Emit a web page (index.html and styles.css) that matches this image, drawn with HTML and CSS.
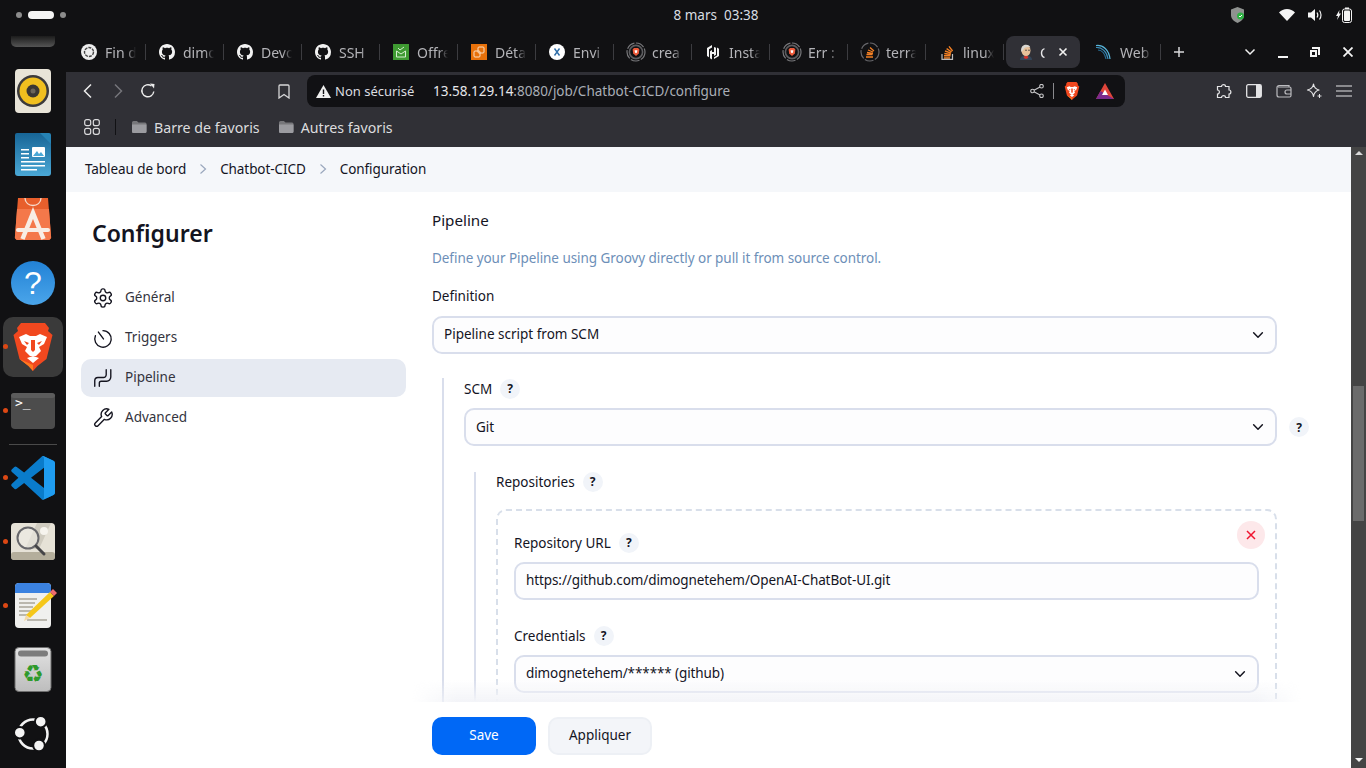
FILE: index.html
```html
<!DOCTYPE html>
<html lang="fr">
<head>
    <meta charset="UTF-8">
    <meta name="viewport" content="width=device-width, initial-scale=1.0">
    <title>Chatbot-CICD Config [Jenkins]</title>
    <link rel="stylesheet" href="styles.css">
</head>
<body>
    <svg class="defs" width="0" height="0">
        <symbol id="i-github" viewBox="0 0 16 16"><path fill="#f2f2f2" d="M8 0C3.58 0 0 3.58 0 8c0 3.54 2.29 6.53 5.47 7.59.4.07.55-.17.55-.38 0-.19-.01-.82-.01-1.49-2.01.37-2.53-.49-2.69-.94-.09-.23-.48-.94-.82-1.13-.28-.15-.68-.52-.01-.53.63-.01 1.08.58 1.23.82.72 1.21 1.87.87 2.33.66.07-.52.28-.87.51-1.07-1.78-.2-3.64-.89-3.64-3.95 0-.87.31-1.59.82-2.15-.08-.2-.36-1.02.08-2.12 0 0 .67-.21 2.2.82.64-.18 1.32-.27 2-.27.68 0 1.36.09 2 .27 1.53-1.04 2.2-.82 2.2-.82.44 1.1.16 1.92.08 2.12.51.56.82 1.27.82 2.15 0 3.07-1.87 3.75-3.65 3.95.29.25.54.73.54 1.48 0 1.07-.01 1.93-.01 2.2 0 .21.15.46.55.38A8.013 8.013 0 0016 8c0-4.42-3.58-8-8-8z"/></symbol>
        <symbol id="i-ring" viewBox="0 0 20 20"><circle cx="10" cy="10" r="9" fill="none" stroke="#77777a" stroke-width="1.2" stroke-dasharray="9 1.5"/><circle cx="10" cy="10" r="6.6" fill="none" stroke="#5d5d60" stroke-width="1.6"/><path fill="#ee5a3a" d="M6.6 7.4 8 6h4l1.4 1.4-.6 4L10 14l-2.8-2.6z"/><path fill="#fff" d="M8.6 8.2h2.8l-.4 2.2-1 .8-1-.8z"/></symbol>
        <symbol id="i-so" viewBox="0 0 16 16"><path fill="none" stroke="#f48024" stroke-width="1.4" d="M5 14h6M5 11.800h6.500M5.300 9.500l6.500 1M6 7l6 2.200M7.600 4.600l5 3.400M10 2.400l3.600 4.600"/><path fill="none" stroke="#bcbbbb" stroke-width="1.2" d="M3 10v5.400h10.500V10"/></symbol>
        <symbol id="i-chev" viewBox="0 0 16 16"><path fill="none" stroke="#14141f" stroke-width="1.7" stroke-linecap="round" stroke-linejoin="round" d="m3 5.500 5 5 5-5"/></symbol>
        <symbol id="i-folder" viewBox="0 0 16 16"><path fill="#77777b" d="M1 3.500A1.500 1.500 0 0 1 2.500 2h3.400l1.600 1.400H14A1.500 1.500 0 0 1 15.500 5v7.500A1.500 1.500 0 0 1 14 14H2.500A1.500 1.500 0 0 1 1 12.500z"/><path fill="#9b9ba0" d="M1 5.500h14.500v7A1.500 1.500 0 0 1 14 14H2.500A1.500 1.500 0 0 1 1 12.500z"/></symbol>
        <symbol id="i-brave" viewBox="0 0 40 48"><path fill="#f1481f" d="M8 0h24l4 5-1 3 4.500 4-6 24-9 7-4.500 5-4.500-5-9-7-6-24L5 8 4 5z"/><path fill="#ff7a1f" d="M20 48l-4.500-5-9-7L20 42z"/><path fill="#fff" d="M6 14l7-3 4 2h6l4-2 7 3-3 7-5 3 2 4-5 5h-6l-5-5 2-4-5-3zM14 35l6-2 6 2-6 5z"/><path fill="#f1481f" d="M18 17h4v10l-2 2-2-2zM11 18l5 2-2 2zM29 18l-5 2 2 2z"/></symbol>
    </svg>

    <header class="topbar">
        <div class="workspaces"><span class="ws-dot"></span><span class="ws-pill"></span><span class="ws-dot"></span></div>
        <div class="clock">8 mars&nbsp;&nbsp;03:38</div>
        <div class="tray">
            <svg class="tray-shield" width="14" height="16" viewBox="0 0 14 16"><path fill="#8f9290" d="M6.500 0 13 2.500V8c0 3.500-2.700 6.500-6.500 8C2.700 14.500 0 11.500 0 8V2.500z"/><circle cx="9.500" cy="9" r="3.500" fill="#2fb344"/><path fill="none" stroke="#fff" d="m8 9 1 1 2-2"/></svg>
            <svg class="tray-wifi" width="16" height="12" viewBox="0 0 16 12"><path fill="#f4f4f4" d="M0 3.500C2 1.500 5 0 8 0s6 1.500 8 3.500L8 12z"/></svg>
            <svg class="tray-sound" width="15" height="14" viewBox="0 0 15 14"><path fill="#f4f4f4" d="M0 4.500h3L7 1v12L3 9.500H0z"/><path fill="none" stroke="#f4f4f4" stroke-width="1.200" d="M9 4.500c1 1.500 1 3.500 0 5M11.500 2.500c2 2.500 2 6.500 0 9"/></svg>
            <svg class="tray-battery" width="16" height="16" viewBox="0 0 16 16"><path fill="#f4f4f4" d="M3.500 3 0 9h2l-1 4 4-6.500H3z"/><rect x="6.500" y="2" width="9" height="13.500" rx="2" fill="none" stroke="#f4f4f4"/><rect x="9" y="0.500" width="4" height="1.500" fill="#f4f4f4"/><rect x="8" y="3.500" width="6" height="10.500" rx="1" fill="#f4f4f4"/></svg>
        </div>
    </header>

    <div class="desktop">
        <nav class="dock">
            <div class="dock-top"></div>
            <div class="dock-item">
                <svg width="48" height="48" viewBox="0 0 48 48"><rect x="6" y="2" width="36" height="44" rx="4" fill="#e8e4d8"/><circle cx="24" cy="24" r="16" fill="#3b3a3c"/><circle cx="24" cy="24" r="13.500" fill="#f0bf1f"/><circle cx="24" cy="24" r="6.500" fill="#3a3733"/><circle cx="24" cy="24" r="2.500" fill="#6b655a"/></svg>
            </div>
            <div class="dock-item">
                <svg width="48" height="48" viewBox="0 0 48 48"><defs><linearGradient id="wr" x1="0" y1="0" x2="0" y2="1"><stop offset="0" stop-color="#176596"/><stop offset="1" stop-color="#4aa8d6"/></linearGradient></defs><path fill="url(#wr)" d="M8 2h26l8 8v32a3 3 0 0 1-3 3H9a3 3 0 0 1-3-3V4a2 2 0 0 1 2-2z"/><path fill="#2683b5" d="M31 2h9a2 2 0 0 1 2 2v9z"/><g fill="#fff"><rect x="12" y="18" width="8" height="1.500"/><rect x="12" y="22" width="8" height="1.500"/><rect x="12" y="26" width="8" height="1.500"/><rect x="12" y="30" width="24" height="1.500"/><rect x="12" y="34" width="24" height="1.500"/><rect x="12" y="38" width="16" height="1.500"/><rect x="23" y="16" width="13" height="10" rx="1"/></g><path fill="#4aa8d6" d="m24 25 4-5 2 3 2-2 3 4z"/></svg>
            </div>
            <div class="dock-item">
                <svg width="48" height="48" viewBox="0 0 48 48"><path fill="#e85f2c" d="M9 3h30l3 38a3 3 0 0 1-3 4H9a3 3 0 0 1-3-4z"/><path fill="#f4784a" d="M8 14h32l2 27a3 3 0 0 1-3 4H9a3 3 0 0 1-3-4z"/><path fill="none" stroke="#f6dccd" stroke-width="1.300" d="M16 3c0 10 16 10 16 0"/><path fill="none" stroke="#f8ede4" stroke-width="4.500" d="M13.500 44 24 18l10.500 26"/><path fill="none" stroke="#f8ede4" stroke-width="4" stroke-linecap="round" d="M9 35h30"/></svg>
            </div>
            <div class="dock-item">
                <svg width="48" height="48" viewBox="0 0 48 48"><defs><linearGradient id="hp" x1="0" y1="0" x2="0" y2="1"><stop offset="0" stop-color="#2282d6"/><stop offset="1" stop-color="#4aa5ea"/></linearGradient></defs><circle cx="24" cy="24" r="22" fill="url(#hp)"/><text x="24" y="35" text-anchor="middle" class="dock-q">?</text></svg>
            </div>
            <div class="dock-item dock-active">
                <span class="run-dot"></span>
                <svg width="40" height="48"><use href="#i-brave"/></svg>
            </div>
            <div class="dock-item">
                <span class="run-dot"></span>
                <svg width="48" height="48" viewBox="0 0 48 48"><rect x="2" y="6" width="44" height="36" rx="4" fill="#4c4c4c"/><rect x="2" y="6" width="44" height="5" rx="3" fill="#5c5c5c"/><text x="6" y="20" class="dock-term">&gt;_</text></svg>
            </div>
            <div class="dock-sep"></div>
            <div class="dock-item">
                <span class="run-dot"></span>
                <svg width="44" height="44" viewBox="0 0 100 100"><path fill="#0a7ccb" d="M96.460 10.800 75.860.87a6.230 6.230 0 0 0-7.100 1.200L29.900 37.600 12.970 24.750a4.160 4.160 0 0 0-5.320.24l-5.530 5.030a4.160 4.160 0 0 0 0 6.150L16.800 49.570 2.120 62.970a4.160 4.160 0 0 0 0 6.150l5.530 5.030a4.160 4.160 0 0 0 5.320.24L29.900 61.540l38.860 35.530a6.230 6.230 0 0 0 7.100 1.200l20.600-9.910A6.240 6.240 0 0 0 100 82.730V16.400a6.240 6.240 0 0 0-3.540-5.600zM75 72.700 45.500 49.570 75 26.430z"/><path fill="#1f9cf0" d="M68.760 2.070a6.230 6.230 0 0 1 7.100-1.200l20.600 9.930A6.240 6.240 0 0 1 100 16.400v66.330a6.240 6.240 0 0 1-3.540 5.630l-20.600 9.910a6.230 6.230 0 0 1-7.100-1.200c2.300 2.300 6.240.67 6.240-2.580V4.650c0-3.250-3.940-4.880-6.240-2.580z"/></svg>
            </div>
            <div class="dock-item">
                <span class="run-dot"></span>
                <svg width="48" height="48" viewBox="0 0 48 48"><rect x="2" y="5" width="44" height="37" rx="4" fill="#e6e2d7"/><path fill="#cfcbbf" d="m28 5 14 0-12 26H16z"/><rect x="2" y="34" width="44" height="8" rx="3" fill="#b4ae9c"/><circle cx="35" cy="13" r="4" fill="#f6f4ee"/><circle cx="19" cy="20" r="10.500" fill="#eeece6" fill-opacity=".6" stroke="#67676b" stroke-width="2"/><path stroke="#454548" stroke-width="3" stroke-linecap="round" d="m27 28 8 8"/></svg>
            </div>
            <div class="dock-item">
                <span class="run-dot"></span>
                <svg width="48" height="48" viewBox="0 0 48 48"><rect x="6" y="1" width="36" height="45" rx="4" fill="#f0f0ee"/><path fill="#3b82e0" d="M10 1h28a4 4 0 0 1 4 4v6H6V5a4 4 0 0 1 4-4z"/><g fill="#bab7ae"><rect x="10" y="16" width="18" height="2"/><rect x="10" y="20" width="16" height="2"/><rect x="10" y="24" width="14" height="2"/><rect x="10" y="28" width="12" height="2"/><rect x="10" y="32" width="10" height="2"/><rect x="18" y="37" width="20" height="2"/></g><path fill="#f5c71a" d="m41 10 4 4-24 22-4-3z"/><path fill="#f3d9a6" d="m17 33 4 3-6 3z"/><path fill="#ee6b6f" d="m41 10 3-3 4 4-3 3z"/></svg>
            </div>
            <div class="dock-item">
                <svg width="48" height="48" viewBox="0 0 48 48"><defs><linearGradient id="tr" x1="0" y1="0" x2="0" y2="1"><stop offset="0" stop-color="#e2e2e2"/><stop offset="1" stop-color="#bdbdbd"/></linearGradient></defs><rect x="6" y="1.500" width="36" height="44" rx="4" fill="url(#tr)" stroke="#6f6f6f"/><rect x="9" y="4.500" width="30" height="6" rx="3" fill="#7c7c7c"/><text x="24" y="36" text-anchor="middle" class="dock-recycle">♻</text></svg>
            </div>
            <div class="dock-item">
                <svg width="38" height="38" viewBox="0 0 38 38"><circle cx="19" cy="19" r="14.500" fill="none" stroke="#f4f4f4" stroke-width="2.500"/><g fill="#f4f4f4" stroke="#111113" stroke-width="2"><circle cx="26.700" cy="6.700" r="5.800"/><circle cx="5.800" cy="17.700" r="5.800"/><circle cx="25" cy="30.500" r="5.800"/></g></svg>
            </div>
        </nav>

        <div class="browser">
            <div class="tabstrip">
                <div class="tab"><svg width="16" height="16" viewBox="0 0 16 16"><circle cx="8" cy="8" r="8" fill="#ededed"/><circle cx="8" cy="8" r="4.500" fill="none" stroke="#444" stroke-width="1.400" stroke-dasharray="3 1"/></svg><span class="tab-label">Fin d</span></div>
                <div class="tab"><svg width="16" height="16"><use href="#i-github"/></svg><span class="tab-label">dimo</span></div>
                <div class="tab"><svg width="16" height="16"><use href="#i-github"/></svg><span class="tab-label">Devo</span></div>
                <div class="tab"><svg width="16" height="16"><use href="#i-github"/></svg><span class="tab-label">SSH</span></div>
                <div class="tab"><svg width="16" height="16" viewBox="0 0 16 16"><rect width="16" height="16" fill="#3f9a32"/><path fill="none" stroke="#d6efd0" d="M3.500 7 8 10l4.500-3v6h-9zM5 4l2 2 4-3"/></svg><span class="tab-label">Offre</span></div>
                <div class="tab"><svg width="16" height="16" viewBox="0 0 16 16"><rect width="16" height="16" fill="#e8710a"/><g fill="none" stroke="#fbe0c4"><rect x="3" y="7" width="6" height="6" rx="1"/><rect x="7" y="3" width="6" height="6" rx="1"/></g></svg><span class="tab-label">Déta</span></div>
                <div class="tab"><svg width="16" height="16" viewBox="0 0 16 16"><circle cx="8" cy="8" r="8" fill="#fff"/><path fill="none" stroke="#2f6ea8" stroke-width="1.400" d="M5.500 4.500 10.500 11.500M10.500 4.500 5.500 11.500"/></svg><span class="tab-label">Envi</span></div>
                <div class="tab"><svg class="tab-ring" width="20" height="20"><use href="#i-ring"/></svg><span class="tab-label">crea</span></div>
                <div class="tab"><svg width="16" height="16" viewBox="0 0 16 16"><path fill="#f2f2f2" d="M7 1 2 4v8l2 1.200V5.200L7 3.400zM9 3v5H7V6l-2 1.200v7L7 15.500V10h2v2l2-1.200v-7zM12 3.600v7.800L9 13.200V15l5-3V4.800z"/></svg><span class="tab-label">Insta</span></div>
                <div class="tab"><svg class="tab-ring" width="20" height="20"><use href="#i-ring"/></svg><span class="tab-label">Err :</span></div>
                <div class="tab"><svg class="tab-ring" width="20" height="20" viewBox="0 0 20 20"><circle cx="10" cy="10" r="9" fill="none" stroke="#66666a" stroke-width="1.200" stroke-dasharray="9 1.500"/><path fill="none" stroke="#f48024" stroke-width="1.300" d="M6 15h7M6.500 12.500h6M7 10.500l6 1M8 8l5 2M10 5.500l4 3.500"/></svg><span class="tab-label">terra</span></div>
                <div class="tab"><svg width="16" height="16"><use href="#i-so"/></svg><span class="tab-label">linux</span></div>
                <div class="tab tab-active">
                    <svg width="16" height="16" viewBox="0 0 16 16"><path fill="#34465a" d="M2 16c0-3 2-4.500 6-4.500s6 1.500 6 4.500z"/><path fill="#d0322b" d="M6.500 12h3l1 2-2.500 1-2.500-1z"/><ellipse cx="8" cy="6.500" rx="4.500" ry="5.500" fill="#e6c09a"/><path fill="#d9d7d2" d="M3.300 8C2.500 3 5 .8 8 .8c2.500 0 4 1.200 4.300 2.700C10 2.700 6.500 3 5.500 5.500z"/><circle cx="8" cy="6.200" r=".7" fill="#333"/><circle cx="11" cy="6.200" r=".7" fill="#333"/></svg>
                    <span class="tab-label">C</span>
                    <svg class="tab-close" width="10" height="10" viewBox="0 0 10 10"><path stroke="#f2f2f2" stroke-width="1.600" d="m1.500 1.500 7 7M8.500 1.500l-7 7"/></svg>
                </div>
                <div class="tab tab-after"><svg width="16" height="16" viewBox="0 0 16 16"><g fill="none" stroke-width="1.200"><path stroke="#58b4d8" d="M0 1.500C7 .5 13 6 14 15"/><path stroke="#3a8cb8" d="M0 3.500C6 3 11 8 12 15"/><path stroke="#2a6f95" d="M2 6c4 0 7 4 8 9"/></g></svg><span class="tab-label">Web</span></div>
                <button class="new-tab"><svg width="12" height="12" viewBox="0 0 12 12"><path stroke="#d8d8da" stroke-width="1.500" d="M6 1v10M1 6h10"/></svg></button>
                <div class="win-controls">
                    <span class="win-btn"><svg width="12" height="8" viewBox="0 0 12 8"><path fill="none" stroke="#f0f0f0" stroke-width="1.500" d="m1.500 1.500 4.500 4.500 4.500-4.500"/></svg></span>
                    <span class="win-btn"><svg width="10" height="12" viewBox="0 0 10 12"><rect y="10" width="10" height="2" fill="#f4f4f4"/></svg></span>
                    <span class="win-btn"><svg width="10" height="10" viewBox="0 0 10 10"><path fill="#f4f4f4" d="M2 0h8v8H8V2H2zM0 3h7v7H0zM2 5v3h3V5z" fill-rule="evenodd"/></svg></span>
                    <span class="win-btn"><svg width="10" height="10" viewBox="0 0 10 10"><path stroke="#f4f4f4" stroke-width="1.800" d="m.5.500 9 9M9.500.500l-9 9"/></svg></span>
                </div>
            </div>

            <div class="toolbar">
                <div class="nav-btn"><svg width="10" height="16" viewBox="0 0 10 16"><path fill="none" stroke="#ececec" stroke-width="1.500" d="M8 1.500 1.500 8 8 14.500"/></svg></div>
                <div class="nav-btn"><svg width="10" height="16" viewBox="0 0 10 16"><path fill="none" stroke="#75757a" stroke-width="1.500" d="M2 1.500 8.500 8 2 14.500"/></svg></div>
                <div class="nav-btn"><svg width="16" height="16" viewBox="0 0 16 16"><path fill="none" stroke="#ececec" stroke-width="1.400" d="M13.800 8.500A6 6 0 1 1 11.500 3"/><path fill="#ececec" d="M10 .5 14.500 1l-.5 4.500z"/></svg></div>
                <svg class="bookmark" width="12" height="15" viewBox="0 0 12 15"><path fill="none" stroke="#d6d6d8" stroke-width="1.300" d="M1 2a1 1 0 0 1 1-1h8a1 1 0 0 1 1 1v12L6 10.500 1 14z"/></svg>
                <div class="urlbar">
                    <svg width="15" height="13" viewBox="0 0 15 13"><path fill="#efefef" d="M7.500 0 15 13H0z"/><path fill="#111114" d="M6.800 4.500h1.400V9H6.800zM6.800 10h1.400v1.400H6.800z"/></svg>
                    <span class="not-secure">Non sécurisé</span>
                    <span class="url"><span class="url-host">13.58.129.14</span>:8080/job/Chatbot-CICD/configure</span>
                    <svg class="url-share" width="14" height="14" viewBox="0 0 14 14"><g fill="none" stroke="#c8c8ca" stroke-width="1.100"><circle cx="2.500" cy="7" r="1.800"/><circle cx="11.500" cy="2.200" r="1.800"/><circle cx="11.500" cy="11.800" r="1.800"/><path d="M4 6.200 10 3M4 7.800 10 11"/></g></svg>
                    <span class="url-sep"></span>
                    <svg class="url-brave" width="16" height="18"><use href="#i-brave"/></svg>
                    <svg class="url-bat" width="18" height="16" viewBox="0 0 18 16"><path fill="#e0453a" d="M9 0 18 16H0z"/><path fill="#7b2b8c" d="M4.500 8 9 16h9zM0 16l4.500-8L9 16z"/><path fill="#fff" d="M9 6.500 12 12H6z"/></svg>
                </div>
                <div class="tool-icons">
                    <svg width="16" height="16" viewBox="0 0 16 16"><path fill="none" stroke="#e4e4e6" stroke-width="1.200" d="M5.500 3.500C5.500 1 9.500 1 9.500 3.500H13V7c2.500 0 2.500 4 0 4v3.500H9.500c0-2.500-4-2.500-4 0h-4V11c2.500 0 2.500-4 0-4V3.500z"/></svg>
                    <svg width="16" height="14" viewBox="0 0 16 14"><rect x=".7" y=".7" width="14.600" height="12.600" rx="1.500" fill="none" stroke="#e4e4e6" stroke-width="1.300"/><rect x="10" y="1" width="5" height="12" fill="#e4e4e6"/></svg>
                    <svg width="16" height="14" viewBox="0 0 16 14"><path fill="none" stroke="#bcbcc0" stroke-width="1.200" d="M13 3V1.500H3A2 2 0 0 0 1 3.500V11a2 2 0 0 0 2 2h10.500a1.500 1.500 0 0 0 1.500-1.500v-7A1.500 1.500 0 0 0 13.500 3H2"/><path fill="none" stroke="#bcbcc0" stroke-width="1.200" d="M15 6h-4a2 2 0 0 0 0 4h4"/></svg>
                    <svg width="16" height="16" viewBox="0 0 16 16"><path fill="none" stroke="#e4e4e6" stroke-width="1.200" stroke-linejoin="round" d="M7.500 1c.5 3.500 2 5 5.500 6-3.500 1-5 2.500-5.500 6.500C7 10 5.500 8 1.500 7c4-1 5.500-2.500 6-6z"/><path fill="#e4e4e6" d="M13 11h1v1.500h1.500v1H14V15h-1v-1.500h-1.500v-1H13z"/></svg>
                    <svg width="16" height="12" viewBox="0 0 16 12"><path stroke="#e4e4e6" stroke-width="1.200" d="M0 1h16M0 6h16M0 11h16"/></svg>
                </div>
            </div>

            <div class="bookmarks">
                <svg class="apps" width="16" height="16" viewBox="0 0 16 16"><g fill="none" stroke="#dcdcde" stroke-width="1.200"><rect x=".7" y=".7" width="6" height="6" rx="2"/><rect x="9.300" y=".7" width="6" height="6" rx="2"/><rect x=".7" y="9.300" width="6" height="6" rx="2"/><rect x="9.300" y="9.300" width="6" height="6" rx="2"/></g></svg>
                <span class="bm-sep"></span>
                <svg width="16" height="16"><use href="#i-folder"/></svg>
                <span class="bm-label">Barre de favoris</span>
                <svg class="bm-second" width="16" height="16"><use href="#i-folder"/></svg>
                <span class="bm-label">Autres favoris</span>
            </div>

            <div class="viewport">
                <div class="page">
                    <div class="breadcrumbs">
                        <span class="crumb">Tableau de bord</span>
                        <svg width="8" height="12" viewBox="0 0 8 12"><path fill="none" stroke="#9aa7bd" stroke-width="1.200" d="m1.500 1.500 5 4.500-5 4.500"/></svg>
                        <span class="crumb">Chatbot-CICD</span>
                        <svg width="8" height="12" viewBox="0 0 8 12"><path fill="none" stroke="#9aa7bd" stroke-width="1.200" d="m1.500 1.500 5 4.500-5 4.500"/></svg>
                        <span class="crumb">Configuration</span>
                    </div>
                    <div class="page-body">
                        <aside class="sidebar">
                            <h1>Configurer</h1>
                            <ul class="side-menu">
                                <li class="side-item">
                                    <svg width="22" height="22" viewBox="0 0 24 24"><path d="M12.220 2h-.44a2 2 0 0 0-2 2v.18a2 2 0 0 1-1 1.730l-.43.25a2 2 0 0 1-2 0l-.15-.08a2 2 0 0 0-2.730.73l-.22.38a2 2 0 0 0 .73 2.730l.15.1a2 2 0 0 1 1 1.720v.51a2 2 0 0 1-1 1.740l-.15.09a2 2 0 0 0-.73 2.730l.22.38a2 2 0 0 0 2.730.73l.15-.08a2 2 0 0 1 2 0l.43.25a2 2 0 0 1 1 1.730V20a2 2 0 0 0 2 2h.44a2 2 0 0 0 2-2v-.18a2 2 0 0 1 1-1.730l.43-.25a2 2 0 0 1 2 0l.15.08a2 2 0 0 0 2.730-.73l.22-.39a2 2 0 0 0-.73-2.730l-.15-.08a2 2 0 0 1-1-1.740v-.5a2 2 0 0 1 1-1.740l.15-.09a2 2 0 0 0 .73-2.730l-.22-.38a2 2 0 0 0-2.730-.73l-.15.08a2 2 0 0 1-2 0l-.43-.25a2 2 0 0 1-1-1.730V4a2 2 0 0 0-2-2z"/><circle cx="12" cy="12" r="3"/></svg>
                                    <span class="side-label">Général</span>
                                </li>
                                <li class="side-item">
                                    <svg width="22" height="22" viewBox="0 0 24 24"><path d="M12 4a9 9 0 1 1-8.300 5.500"/><path d="M7 5.500l5.500 7.500"/></svg>
                                    <span class="side-label">Triggers</span>
                                </li>
                                <li class="side-item side-active">
                                    <svg width="22" height="22" viewBox="0 0 24 24"><path d="M3 21v-6a3.500 3.500 0 0 1 3.500-3.500h6a3 3 0 0 0 3-3V3"/><path d="M8 21v-3.500a2 2 0 0 1 2-2h6a4.500 4.500 0 0 0 4.500-4.500V3"/></svg>
                                    <span class="side-label">Pipeline</span>
                                </li>
                                <li class="side-item">
                                    <svg width="22" height="22" viewBox="0 0 24 24"><path d="M14.700 6.300a1 1 0 0 0 0 1.400l1.600 1.600a1 1 0 0 0 1.400 0l3.770-3.770a6 6 0 0 1-7.940 7.940l-6.910 6.910a2.120 2.120 0 0 1-3-3l6.910-6.910a6 6 0 0 1 7.940-7.940l-3.760 3.760z"/></svg>
                                    <span class="side-label">Advanced</span>
                                </li>
                            </ul>
                        </aside>
                        <main class="content">
                            <div class="form-scroll">
                                <h2 class="section-title">Pipeline</h2>
                                <p class="section-desc">Define your Pipeline using Groovy directly or pull it from source control.</p>
                                <label class="field-label field-def">Definition</label>
                                <div class="select">
                                    <span class="select-text">Pipeline script from SCM</span>
                                    <svg width="14" height="14"><use href="#i-chev"/></svg>
                                </div>
                                <div class="nested nested-scm">
                                    <label class="field-label">SCM <span class="help">?</span></label>
                                    <div class="field-row">
                                        <div class="select">
                                            <span>Git</span>
                                            <svg width="14" height="14"><use href="#i-chev"/></svg>
                                        </div>
                                        <span class="help">?</span>
                                    </div>
                                    <div class="nested nested-repo">
                                        <label class="field-label">Repositories <span class="help">?</span></label>
                                        <div class="repeated">
                                            <button class="delete-btn"><svg width="10" height="10" viewBox="0 0 10 10"><path stroke="#f0142f" stroke-width="1.500" d="m1 1 8 8M9 1 1 9"/></svg></button>
                                            <label class="field-label">Repository URL <span class="help">?</span></label>
                                            <input class="text-input" type="text" value="https://github.com/dimognetehem/OpenAI-ChatBot-UI.git">
                                            <label class="field-label field-next">Credentials <span class="help">?</span></label>
                                            <div class="select select-tight">
                                                <span class="select-text">dimognetehem/****** (github)</span>
                                                <svg width="14" height="14"><use href="#i-chev"/></svg>
                                            </div>
                                        </div>
                                    </div>
                                </div>
                            </div>
                            <div class="actions">
                                <button class="btn btn-primary">Save</button>
                                <button class="btn btn-secondary">Appliquer</button>
                            </div>
                        </main>
                    </div>
                </div>
                <div class="scrollbar">
                    <svg width="8" height="4" viewBox="0 0 8 4"><path fill="#d8d8d8" d="M0 4 4 0l4 4z"/></svg>
                    <div class="scroll-track"><div class="scroll-thumb"></div></div>
                    <svg width="8" height="4" viewBox="0 0 8 4"><path fill="#f4f4f4" d="M0 0h8L4 4z"/></svg>
                </div>
            </div>
        </div>
    </div>
</body>
</html>
```

FILE: styles.css
```css
* {
    box-sizing: border-box;
}
html, body {
    margin: 0;
    height: 100%;
}
body {
    width: 1366px;
    height: 768px;
    overflow: hidden;
    display: flex;
    flex-direction: column;
    background-color: #111113;
    color: #14141f;
    font-family: "Noto Sans", sans-serif;
    font-size: 13.5px;
}
svg {
    display: block;
    flex-shrink: 0;
}
.defs {
    position: absolute;
}

/* top bar */
.topbar {
    height: 36px;
    position: relative;
    display: flex;
    align-items: center;
    flex-shrink: 0;
    padding-bottom: 6px;
}
.workspaces {
    display: flex;
    align-items: center;
    gap: 6px;
    margin-left: 16px;
}
.ws-dot {
    width: 6px;
    height: 6px;
    border-radius: 50%;
    background-color: #8c8c8c;
}
.ws-pill {
    width: 26px;
    height: 8px;
    border-radius: 4px;
    background-color: #f4f4f4;
}
.clock {
    position: absolute;
    left: 0;
    right: 0;
    top: 5px;
    padding-left: 66px;
    text-align: center;
    color: #d8dde2;
    line-height: 20px;
}
.tray {
    margin-left: auto;
    display: flex;
    align-items: center;
    padding-right: 14px;
}
.tray-wifi {
    margin-left: 34px;
}
.tray-sound {
    margin-left: 13px;
}
.tray-battery {
    margin-left: 13px;
}

.desktop {
    flex: 1;
    display: flex;
    min-height: 0;
}

/* dock */
.dock {
    width: 66px;
    flex-shrink: 0;
    display: flex;
    flex-direction: column;
    align-items: center;
}
.dock-top {
    width: 44px;
    height: 11px;
    margin-bottom: 12px;
    border-radius: 0 0 5px 5px;
    background: linear-gradient(#1c1c1c, #555);
}
.dock-item {
    position: relative;
    width: 60px;
    height: 64px;
    display: flex;
    align-items: center;
    justify-content: center;
}
.dock-active {
    height: 60px;
    margin: 2px 0;
    border-radius: 10px;
    background-color: #3a3a3a;
}
.dock-sep {
    width: 48px;
    height: 1px;
    margin: 1px 0;
    background-color: #4a4a4a;
}
.run-dot {
    position: absolute;
    left: 0;
    top: 50%;
    width: 5px;
    height: 5px;
    margin-top: -3px;
    border-radius: 50%;
    background-color: #dd4814;
}
.dock-q {
    font-family: "Liberation Sans", sans-serif;
    font-size: 32px;
    fill: #fff;
}
.dock-term {
    font-family: "DejaVu Sans Mono", monospace;
    font-size: 13px;
    fill: #fff;
}
.dock-recycle {
    font-family: "DejaVu Sans", sans-serif;
    font-size: 24px;
    fill: #2e9a2b;
}

/* browser chrome */
.browser {
    flex: 1;
    min-width: 0;
    display: flex;
    flex-direction: column;
}
.tabstrip {
    height: 36px;
    flex-shrink: 0;
    display: flex;
    align-items: flex-start;
    padding-left: 2px;
}
.tab {
    width: 78px;
    height: 32px;
    flex-shrink: 0;
    display: flex;
    align-items: center;
    gap: 8px;
    padding-left: 13px;
    padding-right: 10px;
    position: relative;
    color: #b4b4b8;
    font-size: 14px;
}
.tab::after {
    content: "";
    position: absolute;
    right: 0;
    top: 8px;
    width: 1px;
    height: 16px;
    background-color: #3c3c40;
}
.tab svg {
    overflow: visible;
}
.tab-ring {
    margin: 0 -2px 0 -1px;
}
.tab-label {
    flex: 1;
    min-width: 0;
    overflow: hidden;
    white-space: nowrap;
    -webkit-mask-image: linear-gradient(to right, #000 70%, transparent);
    mask-image: linear-gradient(to right, #000 70%, transparent);
}
.tab-active {
    width: 74px;
    margin-left: 2px;
    margin-right: 3px;
    gap: 6px;
    padding-left: 12px;
    padding-right: 12px;
    border-radius: 8px;
    background-color: #303036;
    color: #e8e8ea;
}
.tab-active::after {
    display: none;
}
.tab-active .tab-label {
    flex: 0 0 9px;
    -webkit-mask-image: linear-gradient(to right, #000 40%, transparent 60%);
    mask-image: linear-gradient(to right, #000 40%, transparent 60%);
}
.tab-close {
    margin-left: auto;
}
.new-tab {
    width: 36px;
    height: 32px;
    padding: 0;
    border: 0;
    background: none;
    display: flex;
    align-items: center;
    justify-content: center;
}
.win-controls {
    margin-left: auto;
    height: 32px;
    display: flex;
    padding-right: 2px;
}
.win-btn {
    width: 32.5px;
    display: flex;
    align-items: center;
    justify-content: center;
}

.toolbar {
    height: 38px;
    flex-shrink: 0;
    display: flex;
    align-items: center;
    padding: 2px 0 2px 7px;
    background-color: #303036;
}
.nav-btn {
    width: 30px;
    height: 30px;
    display: flex;
    align-items: center;
    justify-content: center;
}
.bookmark {
    margin-left: 115px;
}
.urlbar {
    width: 818px;
    height: 32px;
    margin-left: 17px;
    display: flex;
    align-items: center;
    padding-left: 9px;
    border-radius: 8px;
    background-color: #111114;
}
.not-secure {
    margin-left: 4px;
    width: 98px;
    color: #dcdde0;
    font-size: 13px;
}
.url {
    width: 584px;
    color: #a9aeb6;
    white-space: nowrap;
}
.url-host {
    color: #e6e7ea;
}
.url-share {
    margin-left: 13px;
}
.url-sep {
    width: 1px;
    height: 16px;
    margin-left: 9px;
    background-color: #8a8a8e;
}
.url-brave {
    margin-left: 10px;
}
.url-bat {
    margin-left: 16px;
}
.tool-icons {
    display: flex;
    align-items: center;
    gap: 14px;
    margin-left: 91px;
}

.bookmarks {
    height: 37px;
    flex-shrink: 0;
    display: flex;
    align-items: center;
    padding-left: 18px;
    padding-bottom: 3px;
    background-color: #303036;
    color: #dcdcde;
    font-size: 14.2px;
}
.bm-sep {
    width: 1px;
    height: 16px;
    margin: 0 15px;
    background-color: #111114;
}
.bm-label {
    margin-left: 7px;
}
.bm-second {
    margin-left: 18px;
}

/* jenkins page */
.viewport {
    flex: 1;
    min-height: 0;
    display: flex;
}
.page {
    flex: 1;
    min-width: 0;
    display: flex;
    flex-direction: column;
    background-color: #fff;
}
.breadcrumbs {
    height: 45px;
    flex-shrink: 0;
    display: flex;
    align-items: center;
    gap: 13px;
    padding: 0 0 2px 19px;
    background-color: #f5f7fa;
}
.crumb {
    letter-spacing: -0.08px;
}
.page-body {
    flex: 1;
    min-height: 0;
    display: flex;
}
.sidebar {
    width: 346px;
    flex-shrink: 0;
    padding-left: 15px;
}
.sidebar h1 {
    margin: 24px 0 29px 11px;
    font-size: 23px;
    font-weight: 600;
    line-height: 34px;
}
.side-menu {
    list-style: none;
    margin: 0;
    padding: 0;
    display: flex;
    flex-direction: column;
    gap: 2px;
}
.side-item {
    width: 325px;
    height: 38px;
    display: flex;
    align-items: center;
    gap: 11px;
    padding-left: 11px;
    border-radius: 10px;
    color: #33333d;
}
.side-label {
    padding-bottom: 2px;
}
.side-item svg {
    fill: none;
    stroke: #14141f;
    stroke-width: 1.5;
    stroke-linecap: round;
    stroke-linejoin: round;
}
.side-active {
    background-color: #e6eaf2;
}

.content {
    flex: 1;
    min-width: 0;
    display: flex;
    flex-direction: column;
    position: relative;
}
.form-scroll {
    flex: 1;
    min-height: 0;
    overflow: hidden;
    padding: 18px 74px 0 20px;
}
.content::after {
    content: "";
    position: absolute;
    left: 0;
    right: 50px;
    bottom: 66px;
    height: 22px;
    background: linear-gradient(rgba(240, 241, 246, 0), #f3f4f8);
    -webkit-mask-image: linear-gradient(to right, transparent, #000 5%, #000 95%, transparent);
    mask-image: linear-gradient(to right, transparent, #000 5%, #000 95%, transparent);
    pointer-events: none;
}
.section-title {
    margin: 0 0 18px;
    font-size: 15.2px;
    font-weight: 400;
    line-height: 20px;
}
.section-desc {
    margin: 0 0 18px;
    line-height: 20px;
    color: #6d8fb8;
    letter-spacing: -0.055px;
}
.field-label {
    display: flex;
    align-items: center;
    gap: 8px;
    height: 20px;
    margin-bottom: 9px;
    line-height: 20px;
}
.field-def {
    gap: 0;
    margin-bottom: 10px;
}
.field-next {
    margin-top: 26px;
}
.help {
    width: 20px;
    height: 20px;
    flex-shrink: 0;
    display: flex;
    align-items: center;
    justify-content: center;
    border-radius: 50%;
    background-color: #f1f4f9;
    font-size: 12px;
    font-weight: 700;
}
.select,
.text-input {
    width: 100%;
    height: 38px;
    display: flex;
    align-items: center;
    justify-content: space-between;
    padding: 0 10px;
    border: 2px solid #d9deec;
    border-radius: 10px;
    background-color: #fdfdfe;
    color: #14141f;
    font-family: inherit;
    font-size: 13.5px;
}
.select-text {
    padding-bottom: 2px;
}
.select-tight,
.text-input {
    letter-spacing: -0.1px;
}
.text-input {
    padding-bottom: 2px;
}
.nested {
    border-left: 2px solid #d9deec;
    padding-left: 20px;
}
.nested-scm {
    margin: 24px 0 0 10px;
    padding-top: 1px;
}
.nested-repo {
    margin: 26px 0 0 10px;
}
.field-row {
    display: flex;
    align-items: center;
    gap: 12px;
    margin-right: -32px;
}
.repeated {
    position: relative;
    margin-top: 17px;
    padding: 22px 16px 0;
    height: 260px;
    border: 2px dashed #d8dfea;
    border-radius: 10px;
}
.delete-btn {
    position: absolute;
    top: 10px;
    right: 10px;
    width: 28px;
    height: 28px;
    padding: 0;
    border: 0;
    border-radius: 50%;
    background-color: #fde8ea;
    display: flex;
    align-items: center;
    justify-content: center;
}
.actions {
    height: 66px;
    flex-shrink: 0;
    display: flex;
    gap: 12px;
    padding: 15px 0 0 20px;
    background-color: #fff;
}
.btn {
    width: 104px;
    height: 38px;
    padding: 0 0 2px;
    border-radius: 10px;
    font-family: inherit;
    font-size: 13.5px;
}
.btn-primary {
    border: 0;
    background-color: #0068f6;
    color: #fff;
}
.btn-secondary {
    border: 2px solid #edf0f5;
    background-color: #f3f5f9;
    color: #14141f;
}

.scrollbar {
    width: 15px;
    flex-shrink: 0;
    display: flex;
    flex-direction: column;
    align-items: center;
    justify-content: space-between;
    padding: 4px 0 6px;
    background-color: #444;
}
.scroll-track {
    flex: 1;
    width: 100%;
    padding: 231px 2px 0 2px;
}
.scroll-thumb {
    height: 135px;
    background-color: #6b6b6b;
}
```
